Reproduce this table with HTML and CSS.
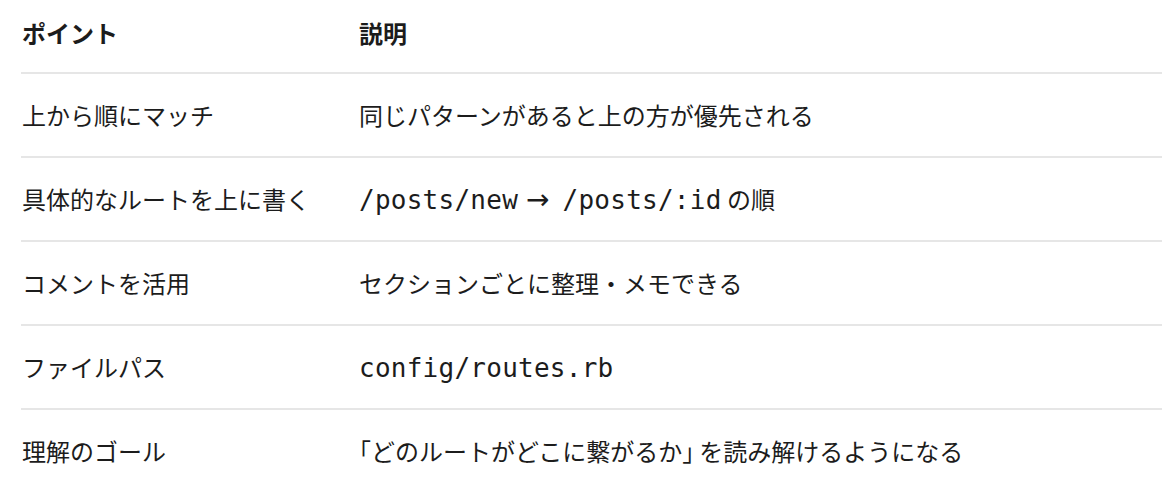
FILE: index.html
```html
<!DOCTYPE html>
<html lang="ja">
<head>
<meta charset="utf-8">
<title>ルーティングのポイント</title>
<link rel="stylesheet" href="styles.css">
</head>
<body>
<table class="points">
  <thead>
    <tr><th class="col-point">ポイント</th><th>説明</th></tr>
  </thead>
  <tbody>
    <tr><td class="col-point">上から順にマッチ</td><td>同じパターンがあると上の方が優先される</td></tr>
    <tr><td class="col-point">具体的なルートを上に書く</td><td><code>/posts/new</code><span class="arrow">→</span><code>/posts/:id</code> の順</td></tr>
    <tr><td class="col-point">コメントを活用</td><td>セクションごとに整理・メモできる</td></tr>
    <tr><td class="col-point">ファイルパス</td><td><code>config/routes.rb</code></td></tr>
    <tr class="last"><td class="col-point">理解のゴール</td><td><span class="half">「</span>どのルートがどこに繋がるか<span class="half close">」</span>を読み解けるようになる</td></tr>
  </tbody>
</table>
</body>
</html>
```
FILE: styles.css
```css
html, body {
  margin: 0;
  padding: 0;
  background: #ffffff;
}
body {
  padding-left: 21px;
  font-family: "Noto Sans CJK JP", "Noto Sans", sans-serif;
  color: #1c1c1c;
  font-size: 24px;
}
.points {
  width: 1141px;
  border-collapse: collapse;
  table-layout: fixed;
}
.points th,
.points td {
  text-align: left;
  vertical-align: middle;
  height: 36px;
  line-height: 36px;
  padding: 23px 0 23px 0;
  border-bottom: 2px solid #e6e6e6;
  white-space: nowrap;
  box-sizing: content-box;
}
.points th {
  font-weight: 700;
  padding-top: 15px;
  padding-bottom: 21px;
}
.points .col-point {
  width: 337px;
  padding-left: 1px;
}
.points tr.last td {
  border-bottom: none;
}
code {
  font-family: "DejaVu Sans Mono", "Liberation Mono", monospace;
  font-size: 26px;
  line-height: 20px;
  letter-spacing: 0.25px;
  color: #1c1c1c;
}
.arrow {
  display: inline-block;
  font-family: "DejaVu Sans", sans-serif;
  font-size: 28px;
  margin: 0 13px 0 8px;
  line-height: 20px;
}
.half {
  font-feature-settings: "halt" 1;
}
.half.close {
  margin-right: 5px;
}
```
